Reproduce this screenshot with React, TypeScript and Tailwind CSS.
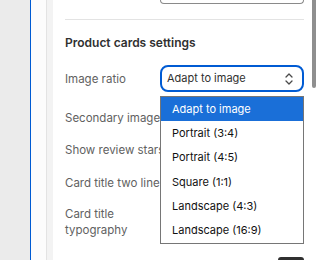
import React from "react";

const options = [
  "Adapt to image",
  "Portrait (3:4)",
  "Portrait (4:5)",
  "Square (1:1)",
  "Landscape (4:3)",
  "Landscape (16:9)",
];

function Row({ label, children }: { label: React.ReactNode; children?: React.ReactNode }) {
  return (
    <div className="flex items-center">
      <div className="w-[95px] text-[11.5px] leading-[16px] text-[#616161]">{label}</div>
      <div className="flex-1">{children}</div>
    </div>
  );
}

export default function App() {
  return (
    <div
      className="flex h-[260px] w-[316px] overflow-hidden bg-[#ebebeb]"
      style={{ fontFamily: "Inter, 'Noto Sans', sans-serif" }}
    >
      <div className="w-[30px] shrink-0 bg-[#ebebeb]" />
      <div className="w-[1px] shrink-0 bg-[#005bd3]" />
      <div className="w-[15px] shrink-0 bg-[#fcfcfc]" />
      <div className="w-[1px] shrink-0 bg-[#e3e3e3]" />
      <div className="w-[6px] shrink-0 bg-[#f3f3f3]" />

      <div className="relative flex w-[259px] shrink-0 flex-col bg-white pl-[12px] pr-[8px]">
        {/* tail of the field above */}
        <div className="ml-[95px] h-[8px] rounded-b-[8px] border border-t-0 border-[#8a8a8a]" />
        <div className="mt-[15px] h-[1px] bg-[#e3e3e3]" />

        <h2 className="mt-[16px] text-[12px] font-semibold leading-[16px] text-[#303030]">
          Product cards settings
        </h2>

        <div className="mt-[14px] flex flex-col">
          <Row label="Image ratio">
            <div className="relative flex h-[27px] items-center rounded-[8px] border-2 border-[#005bd3] pl-[5px] pr-[8px]">
              <span className="flex-1 text-[11px] text-[#303030]">Adapt to image</span>
              <svg width="10" height="14" viewBox="0 0 10 14" fill="none" stroke="#4a4a4a" strokeWidth="1.3" strokeLinecap="round" strokeLinejoin="round">
                <path d="M2 5 L5 2 L8 5" />
                <path d="M2 9 L5 12 L8 9" />
              </svg>
            </div>
          </Row>
          <div className="mt-[18px]">
            <Row label={<span className="whitespace-nowrap">Secondary image on hover</span>} />
          </div>
          <div className="mt-[16px]">
            <Row label={<span className="whitespace-nowrap">Show review stars</span>} />
          </div>
          <div className="mt-[17px]">
            <Row label={<span className="whitespace-nowrap">Card title two line</span>} />
          </div>
          <div className="mt-[15px]">
            <Row
              label={
                <span className="block leading-[16px]">
                  Card title
                  <br />
                  typography
                </span>
              }
            />
          </div>
        </div>

        <div className="mt-[19px] ml-auto h-[8px] w-[26px] rounded-t-[6px] bg-[#303030]" />

        {/* open dropdown list */}
        <div className="absolute left-[107px] top-[96px] w-[144px] border border-[#767676] bg-white">
          {options.map((o, i) => (
            <div
              key={o}
              className={`flex h-[24.3px] items-center pl-[11px] text-[11px] ${
                i === 0 ? "bg-[#1a6fd8] text-white" : "text-[#111]"
              }`}
            >
              {o}
            </div>
          ))}
        </div>
      </div>

      <div className="w-[4px] shrink-0 bg-white">
        <div className="h-[88px] rounded-b-[2px] bg-[#8f8f8f]" />
      </div>
    </div>
  );
}
